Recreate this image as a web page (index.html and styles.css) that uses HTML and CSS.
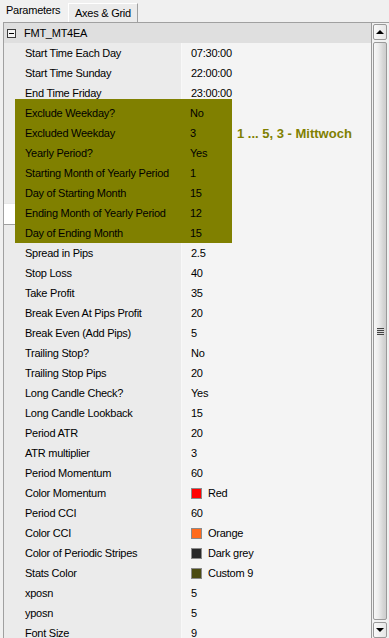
FILE: index.html
```html
<!DOCTYPE html>
<html lang="en">
<head>
  <meta charset="UTF-8">
  <title>FMT_MT4EA</title>
  <link rel="stylesheet" href="styles.css">
</head>
<body>
  <div class="window">
    <div class="tabs">
      <div class="tab active">Parameters</div>
      <div class="tab">Axes &amp; Grid</div>
    </div>

    <div class="panel">
      <div class="grid">
        <div class="group"><span class="toggle"></span>FMT_MT4EA</div>
        <div class="row"><span class="gutter"></span><span class="name">Start Time Each Day</span><span class="value">07:30:00</span></div>
        <div class="row"><span class="gutter"></span><span class="name">Start Time Sunday</span><span class="value">22:00:00</span></div>
        <div class="row"><span class="gutter"></span><span class="name">End Time Friday</span><span class="value">23:00:00</span></div>
        <div class="row"><span class="gutter"></span><span class="name">Exclude Weekday?</span><span class="value">No</span></div>
        <div class="row"><span class="gutter"></span><span class="name">Excluded Weekday</span><span class="value">3</span></div>
        <div class="row"><span class="gutter"></span><span class="name">Yearly Period?</span><span class="value">Yes</span></div>
        <div class="row"><span class="gutter"></span><span class="name">Starting Month of Yearly Period</span><span class="value">1</span></div>
        <div class="row"><span class="gutter"></span><span class="name">Day of Starting Month</span><span class="value">15</span></div>
        <div class="row"><span class="gutter selected"></span><span class="name">Ending Month of Yearly Period</span><span class="value">12</span></div>
        <div class="row"><span class="gutter"></span><span class="name">Day of Ending Month</span><span class="value">15</span></div>
        <div class="row"><span class="gutter"></span><span class="name">Spread in Pips</span><span class="value">2.5</span></div>
        <div class="row"><span class="gutter"></span><span class="name">Stop Loss</span><span class="value">40</span></div>
        <div class="row"><span class="gutter"></span><span class="name">Take Profit</span><span class="value">35</span></div>
        <div class="row"><span class="gutter"></span><span class="name">Break Even At Pips Profit</span><span class="value">20</span></div>
        <div class="row"><span class="gutter"></span><span class="name">Break Even (Add Pips)</span><span class="value">5</span></div>
        <div class="row"><span class="gutter"></span><span class="name">Trailing Stop?</span><span class="value">No</span></div>
        <div class="row"><span class="gutter"></span><span class="name">Trailing Stop Pips</span><span class="value">20</span></div>
        <div class="row"><span class="gutter"></span><span class="name">Long Candle Check?</span><span class="value">Yes</span></div>
        <div class="row"><span class="gutter"></span><span class="name">Long Candle Lookback</span><span class="value">15</span></div>
        <div class="row"><span class="gutter"></span><span class="name">Period ATR</span><span class="value">20</span></div>
        <div class="row"><span class="gutter"></span><span class="name">ATR multiplier</span><span class="value">3</span></div>
        <div class="row"><span class="gutter"></span><span class="name">Period Momentum</span><span class="value">60</span></div>
        <div class="row"><span class="gutter"></span><span class="name">Color Momentum</span><span class="value"><i class="swatch red"></i>Red</span></div>
        <div class="row"><span class="gutter"></span><span class="name">Period CCI</span><span class="value">60</span></div>
        <div class="row"><span class="gutter"></span><span class="name">Color CCI</span><span class="value"><i class="swatch orange"></i>Orange</span></div>
        <div class="row"><span class="gutter"></span><span class="name">Color of Periodic Stripes</span><span class="value"><i class="swatch darkgrey"></i>Dark grey</span></div>
        <div class="row"><span class="gutter"></span><span class="name">Stats Color</span><span class="value"><i class="swatch custom"></i>Custom 9</span></div>
        <div class="row"><span class="gutter"></span><span class="name">xposn</span><span class="value">5</span></div>
        <div class="row"><span class="gutter"></span><span class="name">yposn</span><span class="value">5</span></div>
        <div class="row"><span class="gutter"></span><span class="name">Font Size</span><span class="value">9</span></div>
      </div>

      <div class="scrollbar">
        <div class="sb-btn"><span class="arrow up"></span></div>
        <div class="sb-thumb"><span class="grip"></span></div>
        <div class="sb-btn"><span class="arrow down"></span></div>
      </div>
    </div>

    <!-- highlighted block pasted over the grid -->
    <div class="overlay">
      <div class="o-row"><span>Exclude Weekday?</span><span>No</span></div>
      <div class="o-row"><span>Excluded Weekday</span><span>3</span></div>
      <div class="o-row"><span>Yearly Period?</span><span>Yes</span></div>
      <div class="o-row"><span>Starting Month of Yearly Period</span><span>1</span></div>
      <div class="o-row"><span>Day of Starting Month</span><span>15</span></div>
      <div class="o-row"><span>Ending Month of Yearly Period</span><span>12</span></div>
      <div class="o-row"><span>Day of Ending Month</span><span>15</span></div>
    </div>
    <div class="note">1 ... 5, 3 - Mittwoch</div>
  </div>
</body>
</html>
```

FILE: styles.css
```css
body {
  margin: 0;
  font-family: 'Liberation Sans', Arial, sans-serif;
  font-size: 11px;
  letter-spacing: -0.25px;
  color: #000;
  background: #f0f0f0;
  overflow: hidden;
}
.window {
  position: relative;
  width: 389px;
  height: 638px;
  overflow: hidden;
}
.tabs {
  display: flex;
  height: 22px;
  background: #f0f0f0;
}
.tab {
  box-sizing: border-box;
  height: 19px;
  margin-top: 3px;
  padding: 0 6px;
  line-height: 18px;
  background: #ebebeb;
  border-top: 1px solid #fff;
  border-left: 1px solid #fff;
  border-right: 1px solid #a0a0a0;
}
.tab.active {
  width: 68px;
  height: 22px;
  margin-top: 0;
  padding: 0 6px;
  line-height: 21px;
  background: #f0f0f0;
  border: none;
}
.panel {
  display: flex;
  height: 616px;
  margin-left: 3px;
  padding-right: 1px;
  border-top: 1px solid #a0a0a0;
  border-left: 1px solid #a0a0a0;
  box-sizing: border-box;
  overflow: hidden;
}
.grid {
  flex: 1;
}
.group {
  display: flex;
  align-items: center;
  height: 20px;
  padding-left: 3px;
  background: #dfdfdf;
}
.toggle {
  position: relative;
  box-sizing: border-box;
  width: 9px;
  height: 9px;
  margin-right: 8px;
  border: 1px solid #3c3c3c;
  background: #f4f4f4;
}
.toggle::after {
  content: '';
  position: absolute;
  left: 1px;
  top: 3px;
  width: 5px;
  height: 1px;
  background: #000;
}
.row {
  display: grid;
  grid-template-columns: 18px 159px 1fr;
  height: 20px;
  line-height: 21px;
  background: #ebebeb;
}
.gutter.selected {
  box-sizing: border-box;
  background: #fff;
  border-top: 1px solid #e6e6e6;
  border-bottom: 1px solid #a0a0a0;
}
.name {
  padding-left: 3px;
  white-space: nowrap;
}
.value {
  display: flex;
  align-items: center;
  box-sizing: border-box;
  padding-left: 9px;
  background: #f4f4f4;
  border-bottom: 1px solid #e0e0e0;
  border-left: 1px solid #f8f8f8;
}
.swatch {
  box-sizing: border-box;
  width: 11px;
  height: 11px;
  margin-right: 6px;
  border: 1px solid #8a8a8a;
}
.red { background: #ff0000; }
.orange { background: #ff6a1c; }
.darkgrey { background: #282828; }
.custom { background: #4b4b12; }

.scrollbar {
  display: flex;
  flex-direction: column;
  gap: 2px;
  width: 16px;
  padding-top: 1px;
  background: #f2f2f2;
  border-left: 1px solid #9a9a9a;
}
.sb-btn {
  display: flex;
  align-items: center;
  justify-content: center;
  flex: 0 0 16px;
  margin: 0 1px;
  box-sizing: border-box;
  border: 1px solid #999;
  border-radius: 2px;
  background: linear-gradient(to right, #fafafa, #e6e6e6);
}
.arrow {
  width: 0;
  height: 0;
  border-left: 4px solid transparent;
  border-right: 4px solid transparent;
}
.arrow.up { border-bottom: 4px solid #000; }
.arrow.down { border-top: 4px solid #000; }
.sb-thumb {
  display: flex;
  align-items: center;
  justify-content: center;
  flex: 1;
  margin: 0 1px;
  border: 1px solid #9a9a9a;
  border-radius: 2px;
  background: linear-gradient(to right, #f7f7f7 0%, #ededed 35%, #d6d6d6 75%, #cdcdcd 100%);
}
.grip {
  width: 7px;
  height: 7px;
  background: repeating-linear-gradient(to bottom, #444 0 1px, #d8d8d8 1px 2px);
}

.overlay {
  position: absolute;
  left: 15px;
  top: 99px;
  width: 217px;
  height: 144px;
  padding-top: 4px;
  box-sizing: border-box;
  background: #808000;
}
.o-row {
  display: grid;
  grid-template-columns: 165px 1fr;
  height: 20px;
  line-height: 21px;
  padding-left: 10px;
  white-space: nowrap;
}
.note {
  position: absolute;
  left: 237px;
  top: 124px;
  line-height: 20px;
  font-size: 13px;
  font-weight: bold;
  letter-spacing: 0;
  color: #808000;
}
```
